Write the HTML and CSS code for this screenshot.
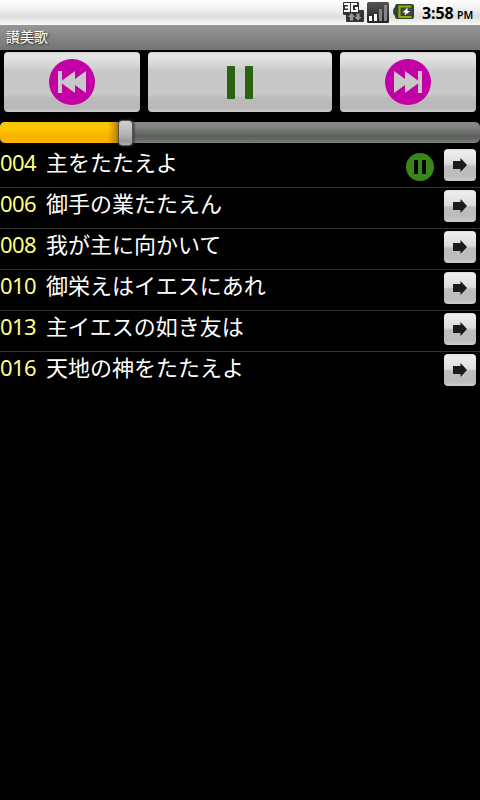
FILE: index.html
```html
<!DOCTYPE html>
<html lang="ja">
<head>
<meta charset="utf-8">
<title>讃美歌</title>
<link rel="stylesheet" href="styles.css">
</head>
<body>
<svg class="defs" width="0" height="0">
  <symbol id="arrow" viewBox="0 0 14 14"><path d="M0 3h7.500V0l6.500 7-6.500 7v-3H0z" fill="#1b1b1b"/></symbol>
</svg>
<header class="status">
  <svg class="net" width="22" height="22" viewBox="0 0 22 22">
    <path d="M2 1h14q1 0 1 1v7h4q1 0 1 1v10q0 1-1 1H5q-1 0-1-1v-6H2q-1 0-1-1V2q0-1 1-1z" fill="#333"/>
    <path d="M2 3h5v7H2M3 6.500h4M15 3h-5v7h5V7h-2" fill="none" stroke="#fff" stroke-width="1.900"/>
    <path d="M9.500 12l3.500 4h-2v3.500H8V16H6zM16 19.500L12.500 16h2v-3.500h3V16h2z" fill="#999"/>
  </svg>
  <svg class="signal" width="22" height="22" viewBox="0 0 22 22">
    <defs><linearGradient id="sg" x2="0" y2="1"><stop stop-color="#555"/><stop offset="1" stop-color="#202020"/></linearGradient></defs>
    <rect width="22" height="21" rx="1.500" fill="url(#sg)"/>
    <path d="M2 14h3v5H2zM7 12h3v7H7z" fill="#fff"/>
    <path d="M12 7h3v12h-3zM17 3h3v16h-3z" fill="#858585"/>
  </svg>
  <svg class="battery" width="22" height="18" viewBox="0 0 22 18">
    <path d="M4 1h15q2 0 2 2v11q0 2-2 2H4q-2 0-2-3-2-1-2-4.500T2 4q0-3 2-3z" fill="#383c36"/>
    <path d="M18.500 3.500h-12v10.500h12" fill="none" stroke="#85b800" stroke-width="2.200"/>
    <path d="M9 5h10v7H9z" fill="#444"/>
    <path d="M14.500 4.500l-5 5h3l-1 3 6-4.500h-3z" fill="#fff"/>
  </svg>
  <span class="time">3:58</span><span class="pm">PM</span>
</header>
<div class="title">讃美歌</div>
<nav class="controls">
  <button class="btn" aria-label="前へ">
    <svg width="46" height="46" viewBox="0 0 46 46"><circle cx="23" cy="23" r="23" fill="#c300a5"/><path d="M9 12h4v9.500L26 12v8l11-8v22l-11-8v8L13 24.500V34H9z" fill="#c8c8c8"/></svg>
  </button>
  <button class="btn" aria-label="一時停止">
    <svg class="bars" width="26" height="33" viewBox="0 0 26 33"><rect width="8" height="33" rx="1"/><rect x="18" width="8" height="33" rx="1"/></svg>
  </button>
  <button class="btn" aria-label="次へ">
    <svg width="46" height="46" viewBox="0 0 46 46"><circle cx="23" cy="23" r="23" fill="#c300a5"/><path d="M37 12h-4v9.500L20 12v8L9 12v22l11-8v8l13-9.500V34h4z" fill="#c8c8c8"/></svg>
  </button>
</nav>
<div class="slider"><div class="fill"></div><div class="thumb"></div></div>
<main>
  <div class="row"><span class="num">004</span><span class="name">主をたたえよ</span>
    <svg class="playing" width="28" height="28" viewBox="0 0 28 28"><circle cx="14" cy="14" r="14" fill="#3a861b"/><path d="M8 7h4v14H8zM16 7h4v14h-4z"/></svg>
    <button class="go"><svg width="14" height="14"><use href="#arrow"/></svg></button></div>
  <div class="row"><span class="num">006</span><span class="name">御手の業たたえん</span><button class="go"><svg width="14" height="14"><use href="#arrow"/></svg></button></div>
  <div class="row"><span class="num">008</span><span class="name">我が主に向かいて</span><button class="go"><svg width="14" height="14"><use href="#arrow"/></svg></button></div>
  <div class="row"><span class="num">010</span><span class="name">御栄えはイエスにあれ</span><button class="go"><svg width="14" height="14"><use href="#arrow"/></svg></button></div>
  <div class="row"><span class="num">013</span><span class="name">主イエスの如き友は</span><button class="go"><svg width="14" height="14"><use href="#arrow"/></svg></button></div>
  <div class="row"><span class="num">016</span><span class="name">天地の神をたたえよ</span><button class="go"><svg width="14" height="14"><use href="#arrow"/></svg></button></div>
</main>
</body>
</html>
```
FILE: styles.css
```css
* { box-sizing: border-box; }
body {
  margin: 0;
  height: 800px;
  overflow: hidden;
  background: #000;
  color: #fff;
  font-family: "Noto Sans", "Noto Sans CJK JP", sans-serif;
}
.defs { display: none; }
svg { display: block; flex: none; }
button { border: 0; padding: 0; display: flex; align-items: center; justify-content: center; }
.status {
  height: 25px;
  padding-right: 6px;
  display: flex;
  justify-content: flex-end;
  color: #000;
  font-weight: 700;
  background: linear-gradient(#fff, #eff1ef 9px, #dcdedb 17px, #e9ebe9 20px, #f8faf8);
}
.net { margin: 1px 3px 0 0; }
.signal { margin: 2px 4px 0 0; }
.battery { margin: 3px 7px 0 0; }
.time { font-size: 16px; line-height: 26px; width: 35px; letter-spacing: -0.1px; white-space: nowrap; }
.pm { font-size: 10.5px; line-height: 30px; width: 17px; font-weight: 600; }
.title {
  height: 25px;
  padding-left: 6px;
  font: 14px/23px "Noto Sans CJK JP", sans-serif;
  text-shadow: 1px 1px 2px #222;
  background: linear-gradient(#969696, #747474);
}
.controls {
  height: 64px;
  padding: 2px 4px;
  display: grid;
  grid-template-columns: 136px 184px 136px;
  gap: 8px;
}
.btn {
  border-radius: 4px;
  background: linear-gradient(#d4d7d2, #e6e6e6 3px, #dedede 8px, #cecece 17px, #c8c8c8 18px, #c8c8c8 42px, #bbb 46px, #b8b8b8 56px, #cbcbcb);
}
.bars { fill: #2b6210; margin-top: 1px; }
.slider {
  position: relative;
  height: 21px;
  margin: 8px 0 4px;
  border-radius: 5px;
  background: linear-gradient(#858585, #858784 4px, #5e605e 14px, #656765 17px, #7f817f);
}
.fill {
  width: 125px;
  height: 21px;
  border-radius: 5px 0 0 5px;
  background: linear-gradient(90deg, transparent 108px, #a87800 120px), linear-gradient(#f8c800, #fcc600 7px, #fab000 15px, #fcb500);
}
.thumb {
  position: absolute;
  left: 118px;
  top: -2px;
  width: 15px;
  height: 26px;
  border: 1px solid #555;
  border-radius: 4px;
  background: linear-gradient(#d0d0d0, #b5b5b5 13px, #999 20px, #b0b0b0);
  box-shadow: 1px 0 3px #333;
}
.row {
  display: flex;
  height: 41px;
  padding: 2px 4px 0 0;
  border-bottom: 1px solid #333;
}
.row:last-child { border-bottom: 0; }
.num { width: 46px; color: #ffff80; font-size: 22px; line-height: 26px; letter-spacing: -0.58px; }
.name { flex: 1; font: 22px/25px "Noto Sans CJK JP", sans-serif; }
.playing { margin: 4px 10px 0 0; }
.go {
  width: 32px;
  height: 32px;
  border-radius: 4px;
  background: linear-gradient(#dedede, #eee 2px, #dcdcdc 15px, #bebebe 17px, #bcbcbc 27px, #ccc);
}
```
